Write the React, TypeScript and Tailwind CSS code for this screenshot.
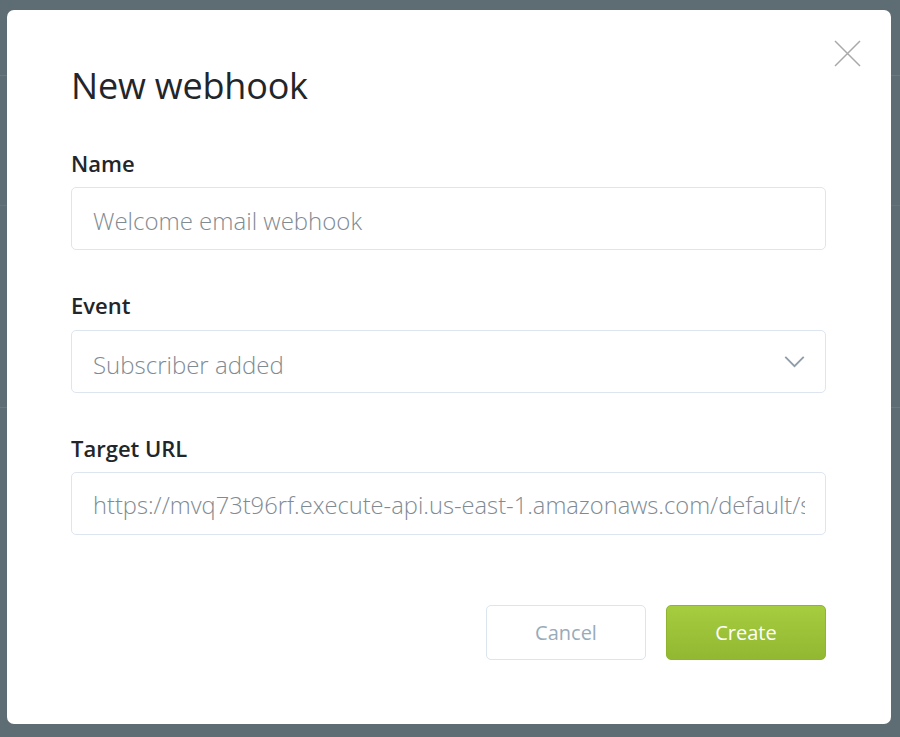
import React from "react";

export default function App() {
  return (
    <div
      className="relative w-[900px] h-[737px] overflow-hidden bg-[#5e6c73]"
      style={{ fontFamily: '"Open Sans", "Noto Sans", sans-serif' }}
    >
      {/* faint background page lines */}
      <div className="absolute left-0 top-[75px] w-full h-px bg-[#6a7980]" />
      <div className="absolute left-0 top-[407px] w-full h-px bg-[#6a7980]" />
      <div className="absolute left-0 top-[205px] w-full h-px bg-[#66757c]" />

      <div className="relative ml-[7px] mt-[10px] w-[884px] h-[714px] bg-white rounded-[7px] pl-[64px] pr-[65px] pt-[56px] flex flex-col">
        <button className="absolute right-[30px] top-[30px] w-[27px] h-[27px] text-[#a9a9a9]">
          <svg viewBox="0 0 27 27" width="27" height="27" fill="none" stroke="currentColor" strokeWidth="1.5">
            <path d="M1 1L26 26M26 1L1 26" />
          </svg>
        </button>

        <h1 className="text-[36px] leading-[40px] font-medium text-[#22262a] tracking-[-0.2px]">
          New webhook
        </h1>

        <label className="mt-[43px] text-[22px] leading-[28px] font-semibold text-[#22262a]">
          Name
        </label>
        <div className="mt-[10px] h-[63px] border border-[#dde6ee] rounded-[5px] flex items-center pl-[21px] pt-[4px]">
          <span className="text-[24px] font-light text-[#7f8b93]">Welcome email webhook</span>
        </div>

        <label className="mt-[41px] text-[22px] leading-[28px] font-semibold text-[#22262a]">
          Event
        </label>
        <div className="mt-[11px] h-[63px] border border-[#dde6ee] rounded-[5px] flex items-center justify-between pl-[21px] pr-[20px]">
          <span className="text-[24px] font-light text-[#7f8b93] pt-[6px]">Subscriber added</span>
          <svg viewBox="0 0 22 13" width="21" height="12" fill="none" stroke="#8e9da9" strokeWidth="2">
            <path d="M1 1L11 11L21 1" />
          </svg>
        </div>

        <label className="mt-[41px] text-[22px] leading-[28px] font-semibold text-[#22262a]">
          Target URL
        </label>
        <div className="mt-[10px] h-[63px] border border-[#dde6ee] rounded-[5px] flex items-center pl-[21px] pr-[20px] pt-[4px] overflow-hidden">
          <span className="text-[23.7px] font-light text-[#7f8b93] whitespace-nowrap overflow-hidden">
            https://mvq73t96rf.execute-api.us-east-1.amazonaws.com/default/subscriberAdded
          </span>
        </div>

        <div className="mt-[70px] flex justify-end gap-[20px]">
          <button className="w-[160px] h-[55px] border border-[#dae5ed] rounded-[5px] bg-white text-[20px] text-[#98abbb]">
            Cancel
          </button>
          <button className="w-[160px] h-[55px] border border-[#8fb530] rounded-[5px] bg-gradient-to-b from-[#a6cc3f] to-[#92b832] text-[20px] text-white">
            Create
          </button>
        </div>
      </div>
    </div>
  );
}
